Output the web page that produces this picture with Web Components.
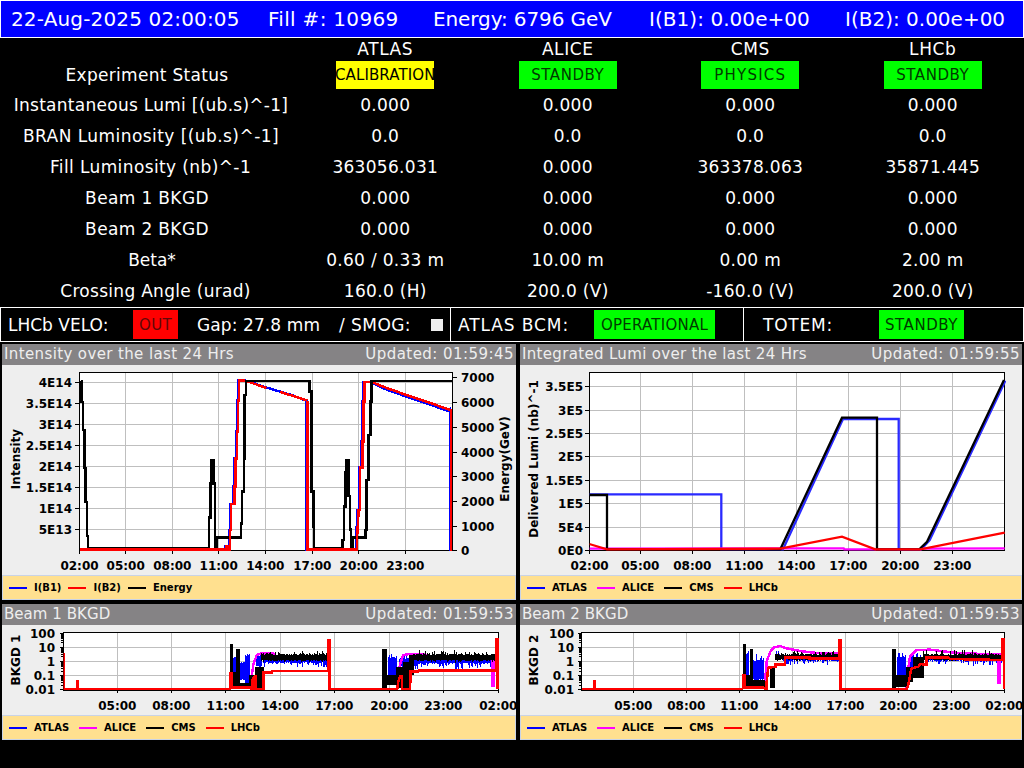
<!DOCTYPE html>
<html lang="en">
<head>
<meta charset="utf-8">
<title>LHC Page 1</title>
<style>
html,body{margin:0;padding:0;background:#000;width:1024px;height:768px;overflow:hidden;font-family:"DejaVu Sans",sans-serif;color:#fff}
.panels{display:grid;grid-template-columns:514px 502px;grid-template-rows:256px 136px;gap:4px;margin:2px 0 0 2px}
</style>
</head>
<body>
<lhc-topbar></lhc-topbar>
<lhc-table></lhc-table>
<lhc-statusbar></lhc-statusbar>
<div class="panels">
  <lhc-panel heading="Intensity over the last 24 Hrs" ls=".38" updated="Updated: 01:59:45"><lhc-chart kind="intensity"></lhc-chart><lhc-legend gap="7" items="I(B1):#0000ff,I(B2):#ff0000,Energy:#000000"></lhc-legend></lhc-panel>
  <lhc-panel heading="Integrated Lumi over the last 24 Hrs" ls=".33" updated="Updated: 01:59:55"><lhc-chart kind="lumi"></lhc-chart><lhc-legend items="ATLAS:#0000ff,ALICE:#ff00ff,CMS:#000000,LHCb:#ff0000"></lhc-legend></lhc-panel>
  <lhc-panel heading="Beam 1 BKGD" ls=".05" updated="Updated: 01:59:53"><lhc-chart kind="b1"></lhc-chart><lhc-legend items="ATLAS:#0000ff,ALICE:#ff00ff,CMS:#000000,LHCb:#ff0000"></lhc-legend></lhc-panel>
  <lhc-panel heading="Beam 2 BKGD" ls=".05" updated="Updated: 01:59:53"><lhc-chart kind="b2"></lhc-chart><lhc-legend items="ATLAS:#0000ff,ALICE:#ff00ff,CMS:#000000,LHCb:#ff0000"></lhc-legend></lhc-panel>
</div>
<script>
const shadow=(el,html)=>{el.attachShadow({mode:'open'}).innerHTML=html};
const PILL={yellow:['#ffff00','#000'],green:['#00ff00','#003a00'],red:['#ff0000','#5e0808']};

class LhcPill extends HTMLElement{
  connectedCallback(){
    const [bg,fg]=PILL[this.getAttribute('tone')];
    const w=this.getAttribute('w')||'98';
    const h=this.getAttribute('h')||'28';
    const ls=this.getAttribute('ls')||'0';
    shadow(this,`<style>:host{display:block;width:${w}px;height:${h}px;background:${bg};color:${fg};font:15px "DejaVu Sans",sans-serif;letter-spacing:${ls}px;overflow:hidden}
    div{display:flex;height:100%;align-items:center;justify-content:center;white-space:nowrap}</style><div><slot></slot></div>`);
  }
}
customElements.define('lhc-pill',LhcPill);

class LhcTopbar extends HTMLElement{
  connectedCallback(){
    const t=[['22-Aug-2025 02:00:05',.15],['Fill #: 10969',.3],['Energy: 6796 GeV',-.1],['I(B1): 0.00e+00',.05],['I(B2): 0.00e+00',0]];
    shadow(this,`<style>:host{display:grid;box-sizing:border-box;height:38px;width:1024px;border:1px solid #fff;background:#0000ff;color:#fff;
      grid-template-columns:257px 165px 216px 196px 1fr;padding:0 0 1px 10px;align-items:center;font:20px "DejaVu Sans",sans-serif;white-space:nowrap}</style>
      ${t.map(([x,l])=>`<span style="letter-spacing:${l}px">${x}</span>`).join('')}`);
  }
}
customElements.define('lhc-topbar',LhcTopbar);

class LhcTable extends HTMLElement{
  connectedCallback(){
    const rows=[
      [['Instantaneous Lumi [(ub.s)^-1]',8,.27],'0.000','0.000','0.000','0.000'],
      [['BRAN Luminosity [(ub.s)^-1]',8,.44],'0.0','0.0','0.0','0.0'],
      [['Fill Luminosity (nb)^-1',7,.39],'363056.031','0.000','363378.063','35871.445'],
      [['Beam 1 BKGD',0,.36],'0.000','0.000','0.000','0.000'],
      [['Beam 2 BKGD',0,.36],'0.000','0.000','0.000','0.000'],
      [['Beta*',10,0],'0.60 / 0.33 m','10.00 m','0.00 m','2.00 m'],
      [['Crossing Angle (urad)',17,.29],'160.0 (H)','200.0 (V)','-160.0 (V)','200.0 (V)']];
    const head=['','ATLAS','ALICE','CMS','LHCb'].map(x=>`<span class="h">${x}</span>`).join('');
    const status=[['CALIBRATION','yellow',.1],['STANDBY','green',.55],['PHYSICS','green',1.2],['STANDBY','green',.55]]
      .map(([t,c,l])=>`<lhc-pill tone="${c}" ls="${l}">${t}</lhc-pill>`).join('');
    const cell=c=>Array.isArray(c)
      ?`<span style="padding-left:${c[1]}px;letter-spacing:${c[2]}px">${c[0]}</span>`
      :`<span class="v">${c}</span>`;
    shadow(this,`<style>:host{display:grid;width:1024px;height:269px;grid-template-columns:294px repeat(4,182.5px);
      grid-template-rows:23px 29px repeat(7,31px);justify-items:center;align-items:center;font:17px "DejaVu Sans",sans-serif;color:#fff;white-space:nowrap}
      lhc-pill{align-self:start}
      .h,.e{margin-bottom:2px}
      span{margin-bottom:1px}
      .v{letter-spacing:.3px}.h{letter-spacing:.6px}</style>
      ${head}<span class="e" style="letter-spacing:.3px">Experiment Status</span>${status}
      ${rows.map(r=>r.map(cell).join('')).join('')}`);
  }
}
customElements.define('lhc-table',LhcTable);

class LhcStatusbar extends HTMLElement{
  connectedCallback(){
    shadow(this,`<style>:host{display:flex;width:1024px;height:35px;font:17px "DejaVu Sans",sans-serif;color:#fff;white-space:nowrap}
      .c{box-sizing:border-box;height:35px;border:1px solid #fff;display:flex;align-items:center}
      .a{width:451px;padding-left:7px}.b{width:293px;border-left:0;padding-left:7px}.d{width:280px;border-left:0;padding-left:19px}
      .sq{width:12px;height:12px;background:#eee;margin-left:20px}
      </style>
      <div class="c a"><span style="width:125px">LHCb VELO:</span><lhc-pill tone="red" w="45" h="29" ls=".3">OUT</lhc-pill><span style="margin-left:19px;width:142px;letter-spacing:.1px">Gap: 27.8 mm</span><span style="letter-spacing:.45px">/ SMOG:</span><span class="sq"></span></div>
      <div class="c b"><span style="width:136px;letter-spacing:.9px">ATLAS BCM:</span><lhc-pill tone="green" w="121" h="29" ls=".25">OPERATIONAL</lhc-pill></div>
      <div class="c d"><span style="width:116px;letter-spacing:.8px">TOTEM:</span><lhc-pill tone="green" w="85" h="29" ls=".55">STANDBY</lhc-pill></div>`);
  }
}
customElements.define('lhc-statusbar',LhcStatusbar);

class LhcPanel extends HTMLElement{
  connectedCallback(){
    const ls=this.getAttribute('ls')||'0';
    shadow(this,`<style>:host{display:flex;flex-direction:column;background:#eee;overflow:hidden;min-width:0}
      header{flex:none;box-sizing:border-box;height:21px;background:#858385;color:#eee;display:flex;justify-content:space-between;align-items:center;padding:0 2px 2px 2px;font:15px "DejaVu Sans",sans-serif;white-space:nowrap}
      .u{letter-spacing:.45px}
      .b{flex:1;display:flex;flex-direction:column;min-height:0}</style>
      <header><span style="letter-spacing:${ls}px">${this.getAttribute('heading')}</span><span class="u">${this.getAttribute('updated')}</span></header>
      <div class="b"><slot></slot></div>`);
  }
}
customElements.define('lhc-panel',LhcPanel);

class LhcLegend extends HTMLElement{
  connectedCallback(){
    const items=this.getAttribute('items').split(',').map(s=>s.split(':'));
    const gap=this.getAttribute('gap')||'10';
    shadow(this,`<style>:host{flex:none;box-sizing:border-box;height:25px;background:#ffe08f;border:1px solid #c9d3e6;display:flex;align-items:center;gap:${gap}px;padding-left:6px;
      font:bold 10px "DejaVu Sans",sans-serif;color:#000;white-space:nowrap}
      .i{display:flex;align-items:center;gap:7px}.s{width:18px;height:2px}</style>
      ${items.map(([t,c])=>`<span class="i"><span class="s" style="background:${c}"></span><span>${t}</span></span>`).join('')}`);
  }
}
customElements.define('lhc-legend',LhcLegend);

/* ---- chart data, all in page pixel coordinates ---- */
let seed=12345;
const rnd=()=>{seed=(seed*1103515245+12345)&0x7fffffff;return seed/0x7fffffff};
const Z=(ox,oy,a)=>a.map(([x,y])=>[ox+x/3,oy+y/3]);
const P=a=>a.map((p,i)=>(i?'L':'M')+p[0].toFixed(1)+' '+p[1].toFixed(1)).join('');
function band(ox,oy,list){
  let d='';
  for(const [x0,x1,top,bot,up,down] of list){
    for(let x=x0;x<=x1;x+=3){
      const r1=rnd(),r2=rnd();
      const t=oy+(top-(up||0)*r1*r1*r1*r1+(up?3*rnd():0))/3;
      const b=oy+(bot+(down||0)*r2*r2*r2*r2-(down?3*rnd():0))/3;
      d+=`M${(ox+x/3).toFixed(1)} ${t.toFixed(1)}V${b.toFixed(1)}`;
    }
  }
  return d;
}
const CH={
 intensity:{x:2,y:365,w:514,h:210,plot:[79.5,372.5,452,550.5],lw:2.5,
  vgrid:[125.7,172.3,218.7,265.3,312.3,358.7,405.3],hgrid:[382.5,403.5,424.5,445.5,466.5,487.5,508.5,529.5],
  xt:[[79.5,'02:00'],[125.7,'05:00'],[172.3,'08:00'],[218.7,'11:00'],[265.3,'14:00'],[312.3,'17:00'],[358.7,'20:00'],[405.3,'23:00']],xy:570,
  yt:[[382.5,'4E14'],[403.5,'3.5E14'],[424.5,'3E14'],[445.5,'2.5E14'],[466.5,'2E14'],[487.5,'1.5E14'],[508.5,'1E14'],[529.5,'5E13']],ylx:72,
  rt:[[377.5,'7000'],[402.5,'6000'],[427,'5000'],[452,'4000'],[476.5,'3000'],[501,'2000'],[526,'1000'],[550.5,'0']],
  titles:[['Intensity',16,459,-90],['Energy(GeV)',505,459,-90]],
  lines(){
   const r=[[0,539],[65,539],[65,538],[78,538],[78,530],[82,530],[82,539],[90,539],[90,480],[93,480],[93,402],[103,402],[103,350],[107,350],[107,265],[111,265],[111,185],[114,185],[114,92],[117,92],[117,32],[135,32],[165,42],[200,54],[240,66],[280,78],[322,92],[322,539],[470,539],[472,490],[476,420],[480,420],[480,292],[487,292],[487,215],[490,215],[490,95],[494,95],[494,36],[515,36],[550,50],[600,68],[650,85],[700,102],[750,120],[753,120],[753,539],[755,539]];
   const b=r.filter(p=>p[0]>=65).map(([x,y])=>[x-3,y<500&&x>118&&x<320?y-2:(x>515&&x<752?y+4:y)]);
   const k=[[27,535],[27,443],[31,443],[31,340],[34,340],[34,272],[42,272],[42,340],[45,340],[45,450],[46,540],[50,540],[50,503],[123,503],[123,460],[126,460],[126,365],[132,365],[132,265],[134,265],[134,75],[138,75],[138,33],[328,33],[328,65],[335,65],[335,365],[340,365],[340,470],[342,470],[342,535],[428,535],[428,510],[432,510],[432,410],[436,410],[436,308],[438,308],[438,272],[446,272],[446,378],[450,378],[450,478],[453,478],[453,537],[457,537],[457,503],[497,503],[497,480],[500,480],[500,330],[505,330],[505,195],[511,195],[511,95],[514,95],[514,33],[755,33]];
   const kl=[[81,381],[81.5,381],[81.5,402],[83,402],[83,430],[84.3,430],[84.3,468],[85.7,468],[85.7,502],[87,502],[87,536],[88,536],[88,548],[209,548]];
   return [
    ['#0000ff',P(Z(200,370,b))],
    ['#000',P(kl)+P(Z(200,370,k))],
    ['#ff0000',P([[79.5,549.7],[200,549.7]])+P(Z(200,370,r.slice(0,24)))+P(Z(200,370,r.slice(26)))+P(Z(200,370,r.slice(24,27)))],
    ['#000',P(Z(200,370,[[138,75],[138,33],[328,33],[328,65]]))+P(Z(200,370,[[514,95],[514,33],[755,33]]))]];
  }},
 lumi:{x:520,y:365,w:502,h:210,plot:[589.5,372.5,1004.5,550.5],smooth:1,lw:2.3,
  vgrid:[640.3,692.3,744.3,796.3,848.3,900.3,952.3],hgrid:[386.5,410.5,433.5,456.5,480.5,503.5,527.5],
  xt:[[589.5,'02:00'],[640.3,'05:00'],[692.3,'08:00'],[744.3,'11:00'],[796.3,'14:00'],[848.3,'17:00'],[900.3,'20:00'],[952.3,'23:00']],xy:570,
  yt:[[386.5,'3.5E5'],[410.5,'3E5'],[433.5,'2.5E5'],[456.5,'2E5'],[480.5,'1.5E5'],[503.5,'1E5'],[527.5,'5E4'],[550.5,'0E0']],ylx:583,
  titles:[['Delivered Lumi (nb)^-1',534,459,-90]],
  lines(){
   const O=[512,430];
   return [
    ['#2a2aff',P(Z(...O,[[232,193],[628,193],[628,358],[813,358],[993,-33],[1160,-33],[1160,358],[1228,358],[1253,330],[1480,-148]]))],
    ['#ff00ff',P(Z(...O,[[232,356],[995,355],[997,358],[1224,358],[1230,356],[1478,355]]))],
    ['#000',P(Z(...O,[[232,195],[285,195],[285,358],[805,358],[990,-37],[1095,-37],[1095,358],[1222,358],[1245,335],[1476,-150]]))],
    ['#ff0000',P(Z(...O,[[232,342],[285,358],[805,356],[990,320],[1090,358],[1225,358],[1478,308]]))]];
  }},
 b1:{x:2,y:625,w:514,h:90,plot:[63.5,632.5,498.5,690],log:1,ylx:55,lw:2.5,
  vgrid:[117.3,171.3,225.7,280,334.3,389.3,443.3],
  xt:[[117.3,'05:00'],[171.3,'08:00'],[225.7,'11:00'],[280,'14:00'],[334.3,'17:00'],[389.3,'20:00'],[443.3,'23:00'],[498.3,'02:00']],xy:710,
  titles:[['BKGD 1',16,660,-90]],
  lines(){
   const A=[210,625],B=[370,625];
   return [
    ['#0000ff',band(...A,[[70,78,100,165,20,5],[87,107,110,165,25,5],[107,120,90,175,20,0],[140,155,90,125,18,8],[160,355,96,114,8,16]])+band(...B,[[55,80,95,155,18,8],[88,118,100,125,12,8],[130,378,100,116,4,20]]),1],
    ['#ff00ff',P(Z(...A,[[122,175],[130,120],[140,90],[155,85],[190,86],[200,95],[355,97]]))+P(Z(...B,[[80,170],[90,120],[100,90],[118,87],[160,88],[200,98],[365,100],[367,100],[367,183],[370,183],[370,100],[378,100]]))],
    ['#000',band(...A,[[60,66,57,182],[66,78,140,182],[78,87,72,182],[87,120,175,190],[118,135,150,190],[135,160,125,190],[155,355,87,107,12,5]])+band(...B,[[36,50,72,190],[50,80,150,180],[78,100,125,190],[100,118,110,190],[118,130,90,150],[130,378,87,107,14,6]]),1],
    ['#ff0000',P([[64,653],[64,689],[77,689],[77,681],[78,681],[78,689],[230.5,689]])+P(Z(...A,[[62,192],[62,145],[66,145],[66,188],[120,188],[122,192],[127,192],[127,165],[133,155],[136,155],[136,192],[160,192],[160,142],[185,142],[186,138],[355,138],[355,45],[358,45],[358,192],[480,192]]))+P(Z(...B,[[0,192],[82,192],[85,170],[90,155],[96,155],[96,192],[120,192],[122,140],[145,140],[146,137],[378,137],[380,42],[383,42],[383,192]]))]];
  }},
 b2:{x:520,y:625,w:502,h:90,plot:[581.5,632.5,1004.5,690],log:1,ylx:574,lw:2.5,
  vgrid:[633.3,686.3,739.3,792.3,845.3,898.3,951.3],
  xt:[[633.3,'05:00'],[686.3,'08:00'],[739.3,'11:00'],[792.3,'14:00'],[845.3,'17:00'],[898.3,'20:00'],[951.3,'23:00'],[1004.3,'02:00']],xy:710,
  titles:[['BKGD 2',534,660,-90]],
  lines(){
   const A=[730,625],B=[880,625];
   return [
    ['#0000ff',band(...A,[[50,57,85,170,15,0],[70,100,105,165,20,5],[140,150,85,105,13,0],[160,327,98,108,4,12]])+band(...B,[[52,78,95,155,15,5],[90,130,95,130,15,5],[135,365,97,108,3,16]]),1],
    ['#ff00ff',P(Z(...A,[[105,170],[110,110],[120,82],[130,68],[150,63],[170,70],[210,78],[240,82],[275,85],[327,86]]))+P(Z(...B,[[78,190],[82,150],[90,95],[110,75],[150,74],[200,80],[240,85],[355,88],[355,172],[359,172],[359,88],[368,88]]))],
    ['#000',band(...A,[[40,47,57,190],[47,60,150,190],[62,70,72,190],[70,105,165,190],[122,135,130,190],[135,327,87,105,10,4]])+band(...B,[[36,46,72,190],[46,80,150,185],[80,100,125,170],[100,130,95,160],[130,365,88,106,16,4]]),1],
    ['#ff0000',P([[581.5,689],[594,689],[594,681],[595,681],[595,689],[743,689]])+P(Z(...A,[[40,192],[40,150],[45,150],[45,188],[100,188],[108,192],[110,192],[110,170],[115,128],[137,125],[137,118],[165,118],[165,98],[238,98],[238,101],[327,101],[327,45],[331,45],[331,192],[450,192]]))+P(Z(...B,[[0,192],[80,192],[85,180],[92,140],[95,130],[115,125],[120,117],[140,120],[140,98],[205,98],[210,102],[368,105],[368,42],[372,42],[372,192]]))]];
  }}
};

class LhcChart extends HTMLElement{
  connectedCallback(){
    const c=CH[this.getAttribute('kind')];
    const [x0,y0,x1,y1]=c.plot;
    let s='';
    s+=`<rect x="${x0}" y="${y0}" width="${x1-x0}" height="${y1-y0}" fill="#fff"/>`;
    c.vgrid.forEach(x=>s+=`<path d="M${x} ${y0}V${y1}" class="g"/>`);
    let yt=c.yt;
    if(c.log){
      const dec=(689.4-633)/4;
      const yy=v=>689.4-dec*(Math.log10(v)+2);
      yt=[[100,'100'],[10,'10'],[1,'1'],[.1,'0.1'],[.01,'0.01']].map(([v,t])=>[yy(v),t]);
      yt.forEach(([y])=>{if(y>y0+2&&y<y1-1)s+=`<path d="M${x0} ${y}H${x1}" class="g"/>`});
      for(let k=-2;k<2;k++)for(let m=1;m<10;m++){
        const y=yy(m*Math.pow(10,k));
        s+=`<path d="M${x0-(m==1?4:2.5)} ${y}H${x0}" class="a"/>`;
      }
      s+=`<path d="M${x0-4} ${yy(100)}H${x0}" class="a"/>`;
    }else{
      c.hgrid.forEach(y=>s+=`<path d="M${x0} ${y}H${x1}" class="g"/>`);
    }
    s+=`<rect x="${x0}" y="${y0}" width="${x1-x0}" height="${y1-y0}" class="a" fill="none"/>`;
    const clip=`c-${this.getAttribute('kind')}`;
    s+=`<clipPath id="${clip}"><rect x="${x0}" y="${y0}" width="${x1-x0+1.5}" height="${y1-y0+1}"/></clipPath><g clip-path="url(#${clip})" class="${c.smooth?'':'crisp'}">`;
    c.lines().forEach(([col,d,w])=>s+=`<path d="${d}" fill="none" stroke="${col}" stroke-width="${w||c.lw}"/>`);
    s+=`</g>`;
    c.xt.forEach(([x,t])=>s+=`<path d="M${x} ${y1}v3" class="a"/><text x="${x}" y="${c.xy}" text-anchor="middle">${t}</text>`);
    yt.forEach(([y,t])=>{
      if(!c.log)s+=`<path d="M${x0-5} ${y}H${x0}" class="a"/>`;
      s+=`<text x="${c.ylx}" y="${y+4.5}" text-anchor="end">${t}</text>`;
    });
    (c.rt||[]).forEach(([y,t])=>s+=`<path d="M${x1} ${y}h5" class="a"/><text x="${x1+9}" y="${y+4.5}">${t}</text>`);
    c.titles.forEach(([t,x,y,r])=>s+=`<text transform="translate(${x} ${y}) rotate(${r})" text-anchor="middle" dominant-baseline="middle">${t}</text>`);
    shadow(this,`<style>:host{display:block;flex:1;min-height:0}
      svg{display:block;width:${c.w}px;height:${c.h}px}
      text{font:bold 12px "DejaVu Sans",sans-serif;fill:#000}
      .g{stroke:#bfbfbf;stroke-width:1;fill:none;shape-rendering:crispEdges}
      .a{stroke:#000;stroke-width:1;shape-rendering:crispEdges}
      .crisp{shape-rendering:crispEdges}</style>
      <svg viewBox="${c.x} ${c.y} ${c.w} ${c.h}" xmlns="http://www.w3.org/2000/svg">${s}</svg>`);
  }
}
customElements.define('lhc-chart',LhcChart);
</script>
</body>
</html>
